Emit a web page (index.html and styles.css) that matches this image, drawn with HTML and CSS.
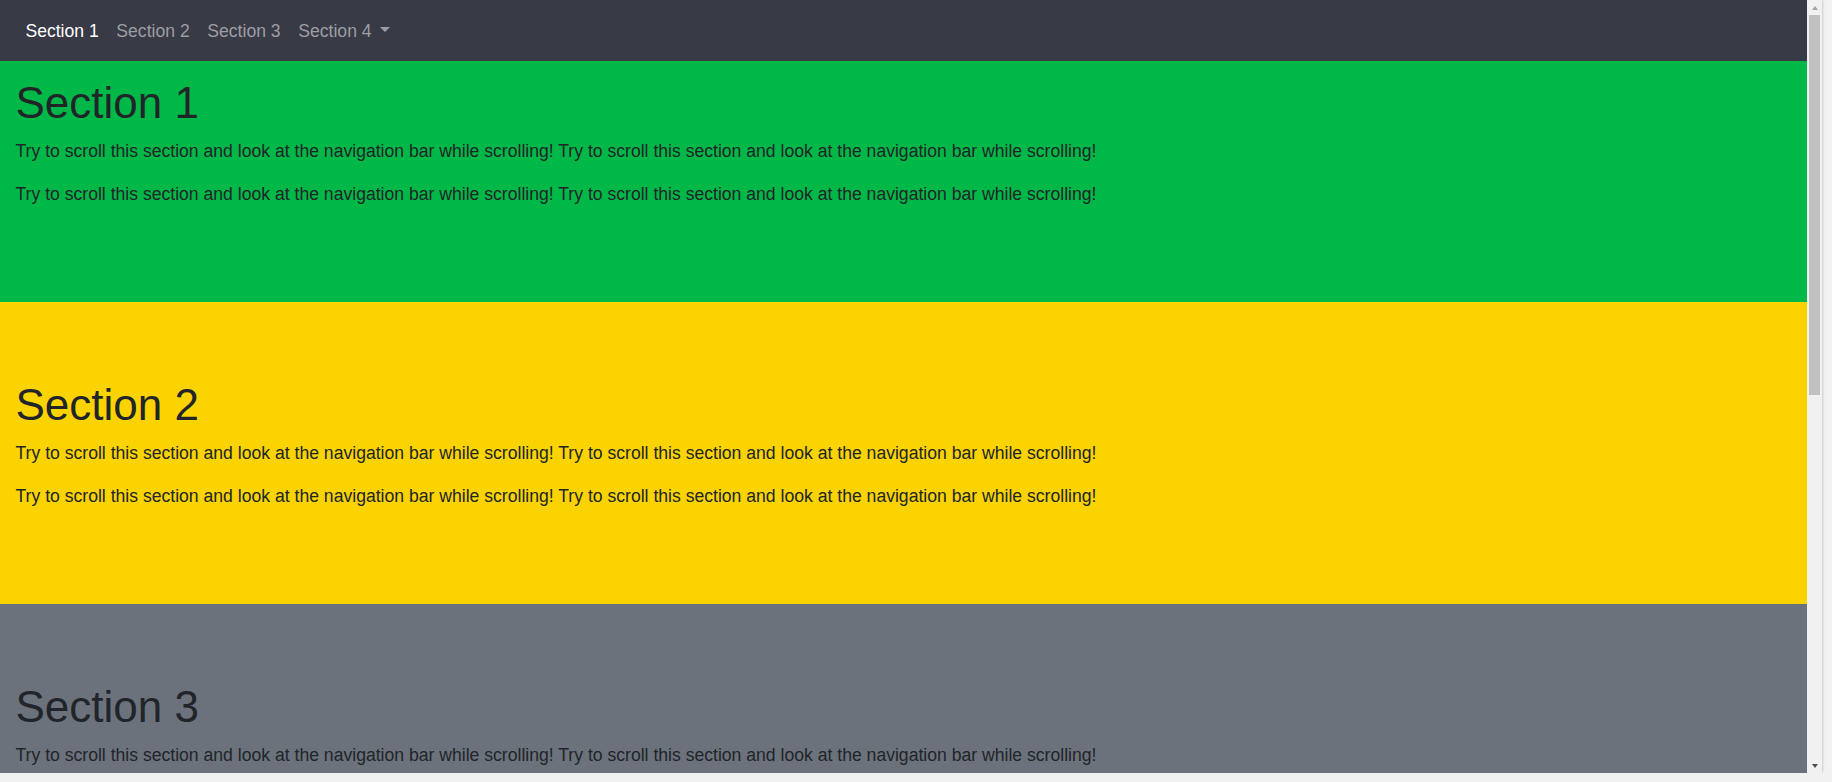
FILE: index.html
```html
<!DOCTYPE html>
<html lang="en">
<head>
<meta charset="utf-8">
<title>Scrollspy</title>
<link rel="stylesheet" href="styles.css">
</head>
<body>
<div class="frame">
  <div class="viewport">
    <div class="page">
      <section class="sec sec-green">
        <h1>Section 1</h1>
        <p>Try to scroll this section and look at the navigation bar while scrolling! Try to scroll this section and look at the navigation bar while scrolling!</p>
        <p>Try to scroll this section and look at the navigation bar while scrolling! Try to scroll this section and look at the navigation bar while scrolling!</p>
      </section>
      <section class="sec sec-yellow">
        <h1>Section 2</h1>
        <p>Try to scroll this section and look at the navigation bar while scrolling! Try to scroll this section and look at the navigation bar while scrolling!</p>
        <p>Try to scroll this section and look at the navigation bar while scrolling! Try to scroll this section and look at the navigation bar while scrolling!</p>
      </section>
      <section class="sec sec-gray">
        <h1>Section 3</h1>
        <p>Try to scroll this section and look at the navigation bar while scrolling! Try to scroll this section and look at the navigation bar while scrolling!</p>
      </section>
    </div>
    <nav class="navbar">
      <a class="nav-link active">Section 1</a>
      <a class="nav-link">Section 2</a>
      <a class="nav-link">Section 3</a>
      <a class="nav-link dropdown-toggle">Section 4</a>
    </nav>
  </div>
  <div class="scrollbar">
    <div class="sb-btn"><span class="tri tri-up"></span></div>
    <div class="thumb"></div>
    <div class="sb-spacer"></div>
    <div class="sb-btn"><span class="tri tri-down"></span></div>
  </div>
</div>
</body>
</html>
```

FILE: styles.css
```css
* { box-sizing: border-box; }

html, body {
  margin: 0;
  padding: 0;
  background: #f1f1f1;
  overflow: hidden;
}

body {
  font-family: "Liberation Sans", Arial, sans-serif;
  font-size: 17.6px;
  line-height: 1.5;
  color: #212529;
}

.frame {
  width: 1822px;
  height: 773px;
  display: flex;
  overflow: hidden;
  box-shadow: 0 0 3px rgba(0, 0, 0, 0.28);
  background: #fff;
}

.viewport {
  position: relative;
  width: 1807px;
  height: 773px;
  overflow: hidden;
}

.navbar {
  position: absolute;
  top: 0;
  left: 0;
  right: 0;
  height: 61px;
  background: #383a45;
  display: flex;
  align-items: center;
  padding: 1px 16.6px 0;
}

.nav-link {
  display: block;
  padding: 0 8.8px;
  color: #9c9ea3;
  text-decoration: none;
  line-height: 26.4px;
}

.nav-link.active {
  color: #ffffff;
}

.dropdown-toggle::after {
  content: "";
  display: inline-block;
  margin-left: 0.5em;
  vertical-align: 0.255em;
  border-top: 0.3em solid #9c9ea3;
  border-right: 0.3em solid transparent;
  border-left: 0.3em solid transparent;
  border-bottom: 0;
}

.page {
  display: flex;
  flex-direction: column;
}

.sec {
  height: 302px;
  padding: 76.6px 15.5px 0;
  flex-shrink: 0;
}

.sec-green { background: #00b847; }
.sec-yellow { background: #fbd300; }
.sec-gray { background: #6c727b; }

.sec h1 {
  margin: 0 0 8.2px;
  font-size: 44px;
  font-weight: 400;
  line-height: 52.8px;
}

.sec p {
  margin: 0 0 17.4px;
  line-height: 26.4px;
}

.scrollbar {
  width: 15px;
  height: 773px;
  background: #f1f1f1;
  display: flex;
  flex-direction: column;
  padding-right: 1px;
}

.sb-btn {
  height: 15px;
  display: flex;
  align-items: center;
  justify-content: center;
  flex-shrink: 0;
}

.thumb {
  height: 380px;
  margin: 0 1px 0 2px;
  background: #c1c1c1;
  flex-shrink: 0;
}

.sb-spacer { flex: 1; }

.tri {
  display: block;
  width: 0;
  height: 0;
  border-left: 3.5px solid transparent;
  border-right: 3.5px solid transparent;
  margin-left: 1px;
}

.tri-up {
  border-bottom: 4px solid #a3a3a3;
}

.tri-down {
  border-top: 4px solid #505050;
}
```
